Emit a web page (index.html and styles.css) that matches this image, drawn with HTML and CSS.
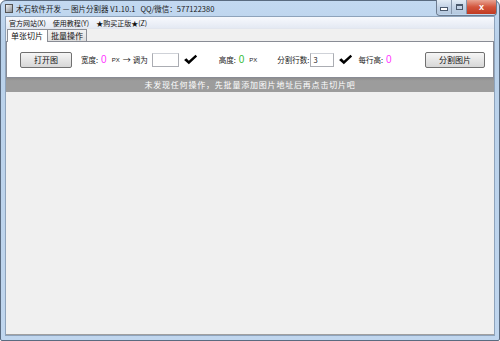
FILE: index.html
```html
<!DOCTYPE html>
<html>
<head>
<meta charset="utf-8">
<link rel="stylesheet" href="styles.css">
</head>
<body>
<div class="window">
  <div class="titlebar">
    <span class="appicon"></span>
    <span class="title">木石软件开发 — 图片分割器 V1.10.1&nbsp;&nbsp;&nbsp;QQ/微信：577122380</span>
    <div class="caption">
      <span class="cbtn cmin"><i></i></span>
      <span class="cbtn cmax"><i></i></span>
      <span class="cbtn cclose">x</span>
    </div>
  </div>
  <div class="client">
    <div class="menubar">
      <span class="menu">官方网站(X)</span>
      <span class="menu">使用教程(Y)</span>
      <span class="menu">★购买正版★(Z)</span>
    </div>
    <div class="tabs">
      <span class="tab active">单张切片</span>
      <span class="tab">批量操作</span>
    </div>
    <div class="page">
      <span class="btn open">打开图</span>
      <span class="lbl w-lbl">宽度:</span><span class="val pink">0</span>
      <span class="px">PX</span><span class="arrow">→</span><span class="lbl">调为</span>
      <span class="input wide"></span>
      <svg class="check" viewBox="0 0 16 12"><path d="M1 6.5 L3.5 4.5 L6.2 7.3 L13.5 0.8 L15.2 2.6 L6.2 11.2 Z" fill="#000"/></svg>
      <span class="lbl h-lbl">高度:</span><span class="val green">0</span>
      <span class="px">PX</span>
      <span class="lbl rows-lbl">分割行数:</span><span class="input narrow">3</span>
      <svg class="check" viewBox="0 0 16 12"><path d="M1 6.5 L3.5 4.5 L6.2 7.3 L13.5 0.8 L15.2 2.6 L6.2 11.2 Z" fill="#000"/></svg>
      <span class="lbl">每行高:</span><span class="val pink">0</span>
      <span class="btn split">分割图片</span>
    </div>
    <div class="status">未发现任何操作，先批量添加图片地址后再点击切片吧</div>
    <div class="rest"></div>
  </div>
</div>
</body>
</html>
```

FILE: styles.css
```css
html, body {
  margin: 0;
  padding: 0;
  width: 500px;
  height: 341px;
  overflow: hidden;
  font-family: "Noto Sans CJK SC", "Liberation Sans", sans-serif;
}
.window {
  width: 500px;
  height: 341px;
  box-sizing: border-box;
  border: 1px solid #5a6b80;
  border-radius: 6px 6px 2px 2px;
  background: linear-gradient(to bottom, #c3d9f1 0px, #b9d1ea 40px, #c0d6ee 100%);
  display: flex;
  flex-direction: column;
}
.titlebar {
  height: 15px;
  display: flex;
  align-items: center;
  padding-left: 4px;
}
.appicon {
  width: 8px;
  height: 9px;
  background: linear-gradient(135deg, #f3f3f3, #8a8f96);
  border: 1px solid #555;
  box-sizing: border-box;
  margin-right: 3px;
}
.title {
  font-size: 7.5px;
  color: #1a1a1a;
  white-space: nowrap;
}
.caption {
  margin-left: auto;
  margin-right: 2px;
  align-self: flex-start;
  margin-top: -1px;
  display: flex;
  height: 15px;
  border: 1px solid #6d7c90;
  border-top: none;
  border-radius: 0 0 4px 4px;
  overflow: hidden;
}
.cbtn {
  height: 14px;
  display: flex;
  align-items: center;
  justify-content: center;
  box-sizing: border-box;
}
.cmin, .cmax {
  width: 15px;
  background: linear-gradient(to bottom, #e3ecf6, #c3d3e6 50%, #b5c8de);
  border-right: 1px solid #8696ab;
}
.cmin i {
  width: 6px;
  height: 2px;
  background: #fff;
  border: 1px solid #4b5a6e;
  margin-top: 4px;
}
.cmax i {
  width: 5px;
  height: 4px;
  background: transparent;
  border: 1px solid #4b5a6e;
  box-shadow: inset 0 1px 0 #4b5a6e;
}
.cclose {
  width: 29px;
  background: linear-gradient(to bottom, #e8a493, #d3553c 50%, #c03a22);
  color: #fff;
  font-size: 9px;
  font-weight: bold;
  font-family: "Liberation Sans", sans-serif;
  line-height: 1;
}
.client {
  flex: 1;
  margin: 0 4px 4px 4px;
  border: 1px solid #8ea3bb;
  background: #f0f0f0;
  display: flex;
  flex-direction: column;
}
.menubar {
  height: 11px;
  display: flex;
  align-items: center;
  background: linear-gradient(to bottom, #f7f9fd, #e4e9f3);
  border-bottom: 1px solid #e2e6ee;
  padding-left: 3px;
  gap: 7px;
}
.menu {
  font-size: 7px;
  color: #111;
  white-space: nowrap;
}
.tabs {
  height: 12px;
  display: flex;
  align-items: flex-end;
  padding-left: 1px;
  position: relative;
}
.tab {
  font-size: 8px;
  color: #111;
  height: 11px;
  line-height: 11px;
  padding: 0 3px;
  border: 1px solid #8c8f96;
  border-bottom: none;
  background: linear-gradient(to bottom, #f2f2f2, #dedede);
  margin-right: -1px;
  white-space: nowrap;
}
.tab.active {
  background: #fff;
  height: 12px;
  line-height: 11px;
  margin-bottom: -1px;
  position: relative;
  z-index: 1;
  padding: 0 4px 0 3px;
}
.page {
  height: 35px;
  background: #fff;
  border: 1px solid #898c95;
  display: flex;
  align-items: center;
  padding-left: 13px;
  font-size: 7.5px;
  color: #222;
  white-space: nowrap;
}
.btn {
  height: 16px;
  box-sizing: border-box;
  border: 1px solid #707070;
  border-radius: 2px;
  background: linear-gradient(to bottom, #f6f6f6, #e6e6e6 50%, #d7d7d7);
  display: flex;
  align-items: center;
  justify-content: center;
  font-size: 8px;
  color: #111;
}
.btn.open {
  width: 52px;
}
.btn.split {
  width: 60px;
  margin-left: auto;
  margin-right: 8px;
}
.lbl {
  font-size: 7.5px;
}
.w-lbl {
  margin-left: 9px;
}
.val {
  font-size: 10px;
  margin-left: 3px;
  font-family: "Liberation Sans", sans-serif;
}
.pink { color: #ff33ff; }
.green { color: #33bb33; }
.px {
  font-size: 6px;
  margin-left: 5px;
  font-family: "Liberation Sans", sans-serif;
}
.arrow {
  font-size: 8px;
  margin: 0 2px 0 3px;
}
.input {
  height: 14px;
  box-sizing: border-box;
  border: 1px solid #abadb3;
  border-top-color: #cfd2d8;
  background: #fff;
  font-size: 7.5px;
  line-height: 12px;
  padding-left: 2px;
}
.input.wide {
  width: 27px;
  margin-left: 4px;
}
.input.narrow {
  width: 24px;
  margin-left: 1px;
}
.check {
  width: 15px;
  height: 11px;
  margin: 0 5px 0 4px;
}
.h-lbl {
  margin-left: 16px;
}
.rows-lbl {
  margin-left: 20px;
}
.status {
  height: 14px;
  background: linear-gradient(to bottom, #8e8e8e, #9c9c9c 20%, #9c9c9c);
  color: #fff;
  font-size: 8px;
  line-height: 14px;
  text-align: center;
  letter-spacing: 0.8px;
}
.rest {
  flex: 1;
  background: #f0f0f0;
  border-bottom: 1px solid #a0a0a0;
}
```
